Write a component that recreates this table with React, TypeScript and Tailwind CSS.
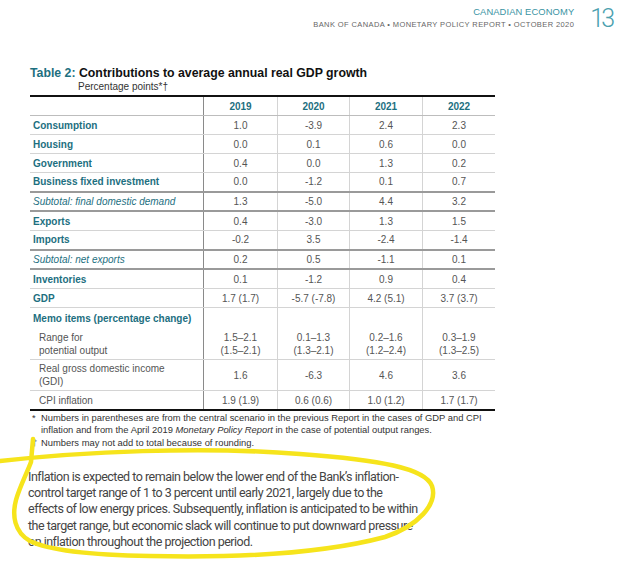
import React from "react";

const teal = "text-[#1d6f7f]";
const cols = "grid grid-cols-[174px_74px_72px_73px_72px]";

type Row = {
  label: string;
  values: string[];
  kind?: "main" | "subtotal";
  thick?: boolean;
};

const rows: Row[] = [
  { label: "Consumption", values: ["1.0", "-3.9", "2.4", "2.3"] },
  { label: "Housing", values: ["0.0", "0.1", "0.6", "0.0"] },
  { label: "Government", values: ["0.4", "0.0", "1.3", "0.2"] },
  { label: "Business fixed investment", values: ["0.0", "-1.2", "0.1", "0.7"], thick: true },
  { label: "Subtotal: final domestic demand", values: ["1.3", "-5.0", "4.4", "3.2"], kind: "subtotal", thick: true },
  { label: "Exports", values: ["0.4", "-3.0", "1.3", "1.5"] },
  { label: "Imports", values: ["-0.2", "3.5", "-2.4", "-1.4"], thick: true },
  { label: "Subtotal: net exports", values: ["0.2", "0.5", "-1.1", "0.1"], kind: "subtotal", thick: true },
  { label: "Inventories", values: ["0.1", "-1.2", "0.9", "0.4"] },
  { label: "GDP", values: ["1.7 (1.7)", "-5.7 (-7.8)", "4.2 (5.1)", "3.7 (3.7)"] },
];

function Cells({ values, h }: { values: string[]; h: string }) {
  return (
    <>
      {values.map((v, i) => (
        <div
          key={i}
          className={`${h} flex items-center justify-center text-center whitespace-pre-line leading-[13px] text-[10px] text-[#555] ${
            i === 3 ? "" : "border-r border-[#d4d4d4]"
          }`}
        >
          {v}
        </div>
      ))}
    </>
  );
}

export default function App() {
  return (
    <div
      className="relative w-[624px] h-[562px] bg-white overflow-hidden"
      style={{ fontFamily: '"Liberation Sans", Arial, sans-serif' }}
    >
      {/* page header */}
      <div className="flex justify-end items-start pt-[6px] pr-[9px]">
        <div className="flex flex-col items-end mr-[16px]">
          <div className="text-[9.4px] leading-[12px] text-[#3a94a3] tracking-[0.1px]">CANADIAN ECONOMY</div>
          <div className="text-[7.5px] leading-[9px] text-[#666] tracking-[0.4px] mt-[2px]">
            BANK OF CANADA • MONETARY POLICY REPORT • OCTOBER 2020
          </div>
        </div>
        <div
          className="text-[25px] leading-[24px] font-light text-[#4aa0ae] tracking-[-3px] mt-[1px] mr-[3px]"
          style={{ fontFamily: "Roboto, sans-serif" }}
        >
          13
        </div>
      </div>

      {/* table */}
      <div className="ml-[30px] mt-[35px] w-[465px]">
        <div className="text-[12.3px] leading-[15px] font-bold text-[#111]">
          <span className={teal}>Table 2:</span> Contributions to average annual real GDP growth
        </div>
        <div className="ml-[48px] text-[10px] leading-[12px] text-[#333]">Percentage points*†</div>

        <div className="mt-[2px] border-t-2 border-[#111]">
          <div className={`${cols} border-b border-[#bdbdbd]`}>
            <div className="h-[18px] border-r border-[#8a8a8a]" />
            {["2019", "2020", "2021", "2022"].map((y, i) => (
              <div
                key={y}
                className={`h-[18px] flex items-center justify-center text-[10px] font-bold ${teal} ${
                  i === 3 ? "" : "border-r border-[#d4d4d4]"
                }`}
              >
                {y}
              </div>
            ))}
          </div>

          {rows.map((r) => {
            const h = r.thick ? "h-[17.5px]" : "h-[18px]";
            return (
              <div
                key={r.label}
                className={`${cols} ${r.thick ? "border-b-2 border-[#9a9a9a]" : "border-b border-[#d4d4d4]"}`}
              >
                <div
                  className={`${h} flex items-center pl-[3px] border-r border-[#8a8a8a] text-[10px] ${teal} ${
                    r.kind === "subtotal" ? "italic" : "font-bold"
                  }`}
                >
                  {r.label}
                </div>
                <Cells values={r.values} h={h} />
              </div>
            );
          })}

          <div className={cols}>
            <div className={`h-[20px] flex items-center pl-[3px] border-r border-[#8a8a8a] text-[10px] font-bold ${teal}`}>
              Memo items (percentage change)
            </div>
            <Cells values={["", "", "", ""]} h="h-[20px]" />
          </div>

          <div className={`${cols} border-b border-[#d4d4d4]`}>
            <div className="h-[31px] flex items-center pl-[9px] border-r border-[#8a8a8a] text-[10px] leading-[13px] text-[#555]">
              Range for
              <br />
              potential output
            </div>
            <Cells
              values={["1.5–2.1\n(1.5–2.1)", "0.1–1.3\n(1.3–2.1)", "0.2–1.6\n(1.2–2.4)", "0.3–1.9\n(1.3–2.5)"]}
              h="h-[31px]"
            />
          </div>

          <div className={`${cols} border-b border-[#d4d4d4]`}>
            <div className="h-[30px] flex items-center pl-[9px] border-r border-[#8a8a8a] text-[10px] leading-[13px] text-[#555]">
              Real gross domestic income
              <br />
              (GDI)
            </div>
            <Cells values={["1.6", "-6.3", "4.6", "3.6"]} h="h-[30px]" />
          </div>

          <div className={`${cols} border-b-2 border-[#111]`}>
            <div className="h-[18px] flex items-center pl-[9px] border-r border-[#8a8a8a] text-[10px] text-[#555]">
              CPI inflation
            </div>
            <Cells values={["1.9 (1.9)", "0.6 (0.6)", "1.0 (1.2)", "1.7 (1.7)"]} h="h-[18px]" />
          </div>
        </div>

        {/* footnotes */}
        <div className="mt-[1px] text-[9.4px] leading-[12px] text-[#333]">
          <div className="flex">
            <span className="w-[11px] shrink-0 pl-[2px]">*</span>
            <span>
              Numbers in parentheses are from the central scenario in the previous Report in the cases of GDP and CPI
              <br />
              inflation and from the April 2019 <i>Monetary Policy Report</i> in the case of potential output ranges.
            </span>
          </div>
          <div className="flex mt-[1px]">
            <span className="w-[11px] shrink-0 pl-[2px]">†</span>
            <span>Numbers may not add to total because of rounding.</span>
          </div>
        </div>
      </div>

      {/* paragraph */}
      <p
        className="ml-[28px] mt-[20px] text-[12.5px] leading-[16.2px] text-[#444] tracking-[-0.5px] whitespace-nowrap"
        style={{ fontFamily: "Roboto, sans-serif" }}
      >
        Inflation is expected to remain below the lower end of the Bank’s inflation-
        <br />
        control target range of 1 to 3 percent until early 2021, largely due to the
        <br />
        effects of low energy prices. Subsequently, inflation is anticipated to be within
        <br />
        the target range, but economic slack will continue to put downward pressure
        <br />
        on inflation throughout the projection period.
      </p>

      {/* yellow hand-drawn annotation */}
      <svg className="absolute left-0 top-0 pointer-events-none" width="624" height="562" viewBox="0 0 624 562">
        <path
          d="M0 461 C 80 452, 200 446, 300 454 C 380 460, 425 468, 432 486 C 438 504, 418 526, 385 537 C 325 553, 240 558, 150 556 C 90 555, 50 551, 30 541 C 14 532, 12 515, 16 500 C 20 486, 27 473, 31 462 L 33 439"
          fill="none"
          stroke="#f6e41c"
          strokeWidth="4.5"
          strokeLinecap="round"
          strokeLinejoin="round"
        />
      </svg>
    </div>
  );
}
